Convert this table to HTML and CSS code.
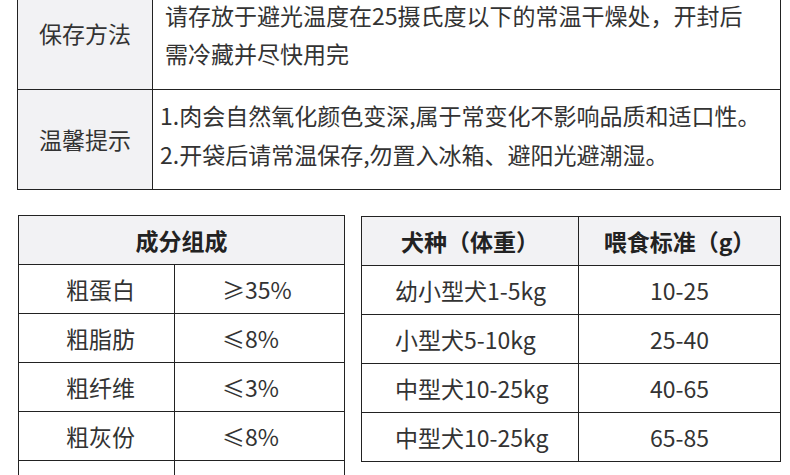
FILE: index.html
```html
<!DOCTYPE html>
<html lang="zh-CN">
<head>
<meta charset="utf-8">
<title>产品信息</title>
<link rel="stylesheet" href="styles.css">
</head>
<body>
<div class="page">
  <section class="info">
    <div class="info-label info-row1">保存方法</div>
    <div class="info-text info-row1 info-text-first">
      <span class="line">请存放于避光温度在25摄氏度以下的常温干燥处，开封后</span>
      <span class="line">需冷藏并尽快用完</span>
    </div>
    <div class="info-label info-row2">温馨提示</div>
    <div class="info-text info-row2 info-text-second">
      <span class="line">1.肉会自然氧化颜色变深,属于常变化不影响品质和适口性。</span>
      <span class="line">2.开袋后请常温保存,勿置入冰箱、避阳光避潮湿。</span>
    </div>
  </section>

  <div class="tables">
    <section class="grid-table ingredients">
      <div class="cell head span">成分组成</div>
      <div class="cell">粗蛋白</div><div class="cell">≥35%</div>
      <div class="cell">粗脂肪</div><div class="cell">≤8%</div>
      <div class="cell">粗纤维</div><div class="cell">≤3%</div>
      <div class="cell">粗灰份</div><div class="cell">≤8%</div>
      <div class="cell"></div><div class="cell"></div>
    </section>

    <section class="grid-table feeding">
      <div class="cell head">犬种（体重）</div><div class="cell head">喂食标准（g）</div>
      <div class="cell">幼小型犬1-5kg</div><div class="cell center">10-25</div>
      <div class="cell">小型犬5-10kg</div><div class="cell center">25-40</div>
      <div class="cell">中型犬10-25kg</div><div class="cell center">40-65</div>
      <div class="cell">中型犬10-25kg</div><div class="cell center">65-85</div>
    </section>
  </div>
</div>
</body>
</html>
```

FILE: styles.css
```css
html, body {
  margin: 0;
  padding: 0;
  background: #ffffff;
}

body {
  font-family: "Noto Sans CJK SC", "Noto Sans", sans-serif;
  color: #333333;
  font-size: 23px;
}

.page {
  margin-top: -22px;
  width: 790px;
}

.info {
  margin-left: 17px;
  width: 764px;
  box-sizing: border-box;
  border: 1px solid #222222;
  display: grid;
  grid-template-columns: 135px 1fr;
}

.info-label {
  background: #f2f2f4;
  border-right: 1px solid #222222;
  display: flex;
  align-items: center;
  justify-content: center;
  padding-bottom: 2px;
  box-sizing: border-box;
}

.info-row1 {
  height: 111px;
  border-bottom: 1px solid #222222;
}

.info-row2 {
  height: 99px;
}

.info-text {
  display: flex;
  flex-direction: column;
  box-sizing: border-box;
  white-space: nowrap;
}

.line {
  display: block;
  line-height: 28px;
}

.info-text-first {
  padding: 22px 0 0 12px;
  gap: 10px;
}

.info-text-second {
  padding: 11px 0 0 7px;
  gap: 11px;
}

.tables {
  display: flex;
  align-items: flex-start;
  gap: 16px;
  margin-top: 25px;
  margin-left: 18px;
}

.grid-table {
  display: grid;
  border-top: 1px solid #222222;
  border-left: 1px solid #222222;
}

.ingredients {
  grid-template-columns: 156px 170px;
}

.feeding {
  margin-top: 1px;
  grid-template-columns: 217px 202px;
}

.cell {
  height: 48px;
  border-right: 1px solid #222222;
  border-bottom: 1px solid #222222;
  display: flex;
  align-items: center;
  white-space: nowrap;
}

.ingredients .cell {
  padding-left: 47px;
}

.feeding .cell {
  padding-left: 33px;
}

.grid-table .head {
  background: #f2f2f4;
  font-weight: 700;
  color: #222222;
  justify-content: center;
  padding-left: 0;
}

.span {
  grid-column: 1 / -1;
}

.feeding .center {
  justify-content: center;
  padding-left: 0;
}
```
